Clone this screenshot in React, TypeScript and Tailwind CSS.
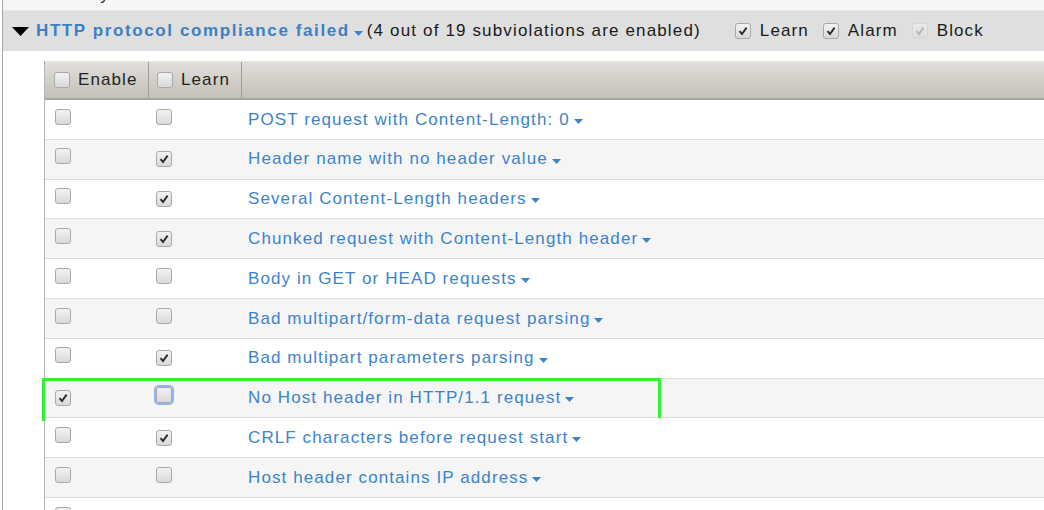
import React from 'react';

type Row = { label: string; enable: boolean; learn: boolean; focus?: boolean };

const rows: Row[] = [
  { label: 'POST request with Content-Length: 0', enable: false, learn: false },
  { label: 'Header name with no header value', enable: false, learn: true },
  { label: 'Several Content-Length headers', enable: false, learn: true },
  { label: 'Chunked request with Content-Length header', enable: false, learn: true },
  { label: 'Body in GET or HEAD requests', enable: false, learn: false },
  { label: 'Bad multipart/form-data request parsing', enable: false, learn: false },
  { label: 'Bad multipart parameters parsing', enable: false, learn: true },
  { label: 'No Host header in HTTP/1.1 request', enable: true, learn: false, focus: true },
  { label: 'CRLF characters before request start', enable: false, learn: true },
  { label: 'Host header contains IP address', enable: false, learn: false },
  { label: 'Content length should be a positive number', enable: false, learn: true },
];

function Check({ checked, disabled, focus }: { checked?: boolean; disabled?: boolean; focus?: boolean }) {
  return (
    <span
      className={
        'relative inline-flex h-[16px] w-[16px] shrink-0 items-center justify-center rounded-[3px] border bg-gradient-to-b from-[#f2f2f2] to-[#d9d9d9] ' +
        (disabled ? 'border-[#d0d0d0] opacity-60' : 'border-[#a9a9a9]') +
        (focus ? ' shadow-[0_0_0_2px_#8fb4f5]' : '')
      }
    >
      {checked && (
        <svg width="10" height="10" viewBox="0 0 10 10">
          <path d="M1.5 5.2 L4 8 L8.6 1.6" fill="none" stroke={disabled ? '#9a9a9a' : '#2b2b2b'} strokeWidth="1.9" />
        </svg>
      )}
    </span>
  );
}

function Caret() {
  return (
    <svg width="9" height="5" viewBox="0 0 9 5" className="ml-[4px] mt-[4px] inline-block">
      <path d="M0 0 H9 L4.5 5 Z" fill="#3b84cc" />
    </svg>
  );
}

export default function App() {
  return (
    <div className="h-[510px] w-[1044px] overflow-hidden bg-white font-['Liberation_Sans',Arial,sans-serif] tracking-[1.1px]">
      <div className="ml-[2px] h-full border-l border-[#a8a8a8]">
        {/* previous section, cut off */}
        <div className="h-[10px] overflow-hidden bg-[#f6f6f6]">
          <div className="-mt-[18px] pl-[33px] text-[17px] text-[#333]">Anomaly</div>
        </div>

        {/* violation header */}
        <div className="flex h-[41px] items-center border-t border-[#e8e8e8] bg-[#dfdfdf] pl-[9px] text-[17px]">
          <svg width="17" height="9" viewBox="0 0 17 9" className="mr-[7px]">
            <path d="M0 0 H17 L8.5 9 Z" fill="#000" />
          </svg>
          <span className="font-bold tracking-[1.6px] text-[#3b7fc4]">HTTP protocol compliance failed</span>
          <Caret />
          <span className="ml-[4px] tracking-[1.15px] text-[#1a1a1a]">(4 out of 19 subviolations are enabled)</span>
          <div className="ml-[34px] flex items-center text-[#1a1a1a]">
            <Check checked />
            <span className="ml-[9px]">Learn</span>
            <span className="ml-[14px]"><Check checked /></span>
            <span className="ml-[9px]">Alarm</span>
            <span className="ml-[14px]"><Check checked disabled /></span>
            <span className="ml-[9px]">Block</span>
          </div>
        </div>

        {/* subviolation table */}
        <div className="ml-[41px] mt-[10px] border-l border-[#b5b5b5]">
          <div className="flex h-[39px] border-t border-[#e6e4e0] border-b-[2px] border-b-[#a9a5a5] bg-gradient-to-b from-[#e2dfdb] to-[#c3c0b9] text-[17px] text-[#222]">
            <div className="flex w-[104px] items-center border-r border-[#9f9b96] pl-[9px]">
              <Check />
              <span className="ml-[8px]">Enable</span>
            </div>
            <div className="flex w-[93px] items-center border-r border-[#9f9b96] pl-[8px]">
              <Check />
              <span className="ml-[8px]">Learn</span>
            </div>
            <div className="flex-1" />
          </div>

          {rows.map((r, i) => (
            <div
              key={r.label}
              className={
                'relative flex h-[39.8px] items-center border-b border-[#dcdcdc] text-[17px] ' +
                (i % 2 === 1 ? 'bg-[#f5f5f5]' : 'bg-white')
              }
            >
              <div className="w-[104px] pl-[10px]">
                <Check checked={r.enable} />
              </div>
              <div className="w-[99px] pl-[7px]">
                <Check checked={r.learn} focus={r.focus} />
              </div>
              <span className="flex items-center text-[#3b84cc]">
                {r.label}
                <Caret />
              </span>
              {r.focus && (
                <div className="pointer-events-none absolute -left-[3px] -top-[1px] h-[43px] w-[619px] border-[3px] border-[#33f033]" />
              )}
            </div>
          ))}
        </div>
      </div>
    </div>
  );
}
